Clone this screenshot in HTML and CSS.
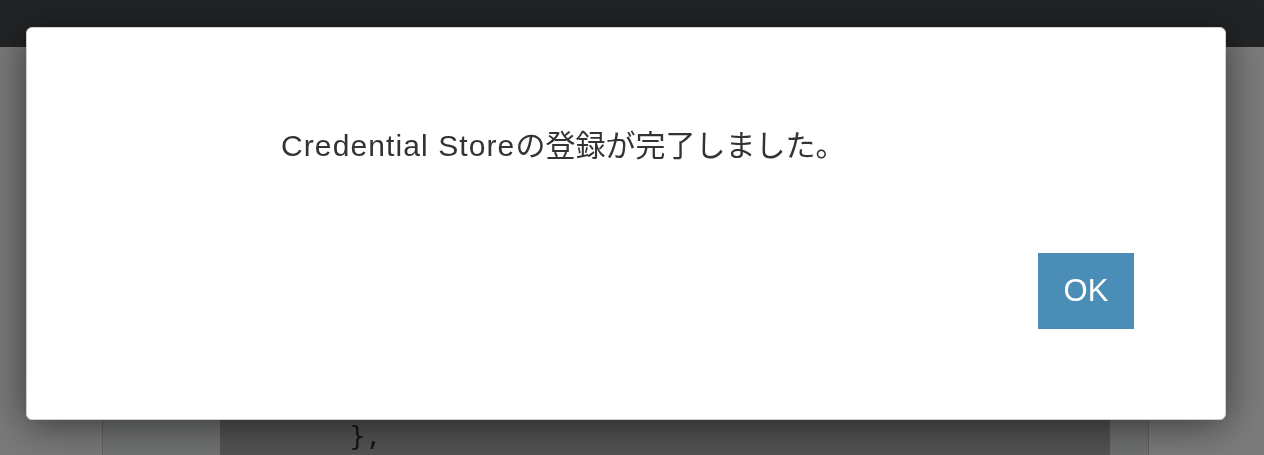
FILE: index.html
```html
<!DOCTYPE html>
<html lang="ja">
<head>
  <meta charset="UTF-8">
  <meta name="viewport" content="width=device-width, initial-scale=1.0">
  <title>Credential Store</title>
  <link rel="stylesheet" href="styles.css">
</head>
<body>
  <header class="topbar"></header>

  <main class="page">
    <div class="side-left"></div>
    <div class="panel-left"></div>
    <div class="code-area">
<pre class="code">{
  "credentials": [
    {
      "id": "store-01",
      "type": "password",
      "scope": "global",
      "user": "admin",
      "secret": "********"
       },</pre>
    </div>
    <div class="panel-right"></div>
    <div class="side-right"></div>
  </main>

  <div class="modal">
    <div class="dialog">
      <p class="message"><span class="latin">Credential Store</span>の登録が完了しました。</p>
      <div class="actions">
        <button class="ok-button" type="button">OK</button>
      </div>
    </div>
  </div>
</body>
</html>
```

FILE: styles.css
```css
html, body {
  margin: 0;
  height: 100%;
  overflow: hidden;
}
body {
  font-family: "Liberation Sans", "Noto Sans CJK JP", sans-serif;
  background-color: #7c7c7c;
}
.topbar {
  height: 47px;
  background-color: #222426;
}
.page {
  display: flex;
  height: 408px;
}
.side-left {
  width: 102px;
  background-color: #7a7a7a;
  border-right: 1px solid #646464;
}
.panel-left {
  width: 117px;
  background-color: #727473;
}
.code-area {
  width: 890px;
  background-color: #545454;
  overflow: hidden;
}
.code {
  margin: 0;
  padding: 83px 0 0 20px;
  font-family: "DejaVu Sans Mono", monospace;
  font-size: 26px;
  line-height: 36px;
  color: #161616;
}
.panel-right {
  width: 38px;
  background-color: #6f7170;
  border-right: 1px solid #5f5f5f;
}
.side-right {
  flex: 1;
  background-color: #7c7c7c;
}
.modal {
  position: fixed;
  top: 27px;
  left: 26px;
}
.dialog {
  width: 1198px;
  height: 391px;
  box-sizing: content-box;
  background-color: white;
  border: 1px solid #cfcfcf;
  border-radius: 6px;
  box-shadow: 0 5px 40px rgba(0,0,0,0.55);
  padding: 0;
  display: flex;
  flex-direction: column;
}
.message {
  margin: 97px 0 0 254px;
  font-size: 30px;
  line-height: 42px;
  color: #333;
}
.latin {
  letter-spacing: 1.1px;
}
.actions {
  display: flex;
  justify-content: flex-end;
  margin-top: 86px;
  padding-right: 91px;
}
.ok-button {
  width: 96px;
  height: 76px;
  background-color: #4a8eb7;
  color: white;
  border: none;
  border-radius: 0;
  font-family: "Liberation Sans", sans-serif;
  font-size: 31px;
  padding: 0;
  cursor: pointer;
}
```
